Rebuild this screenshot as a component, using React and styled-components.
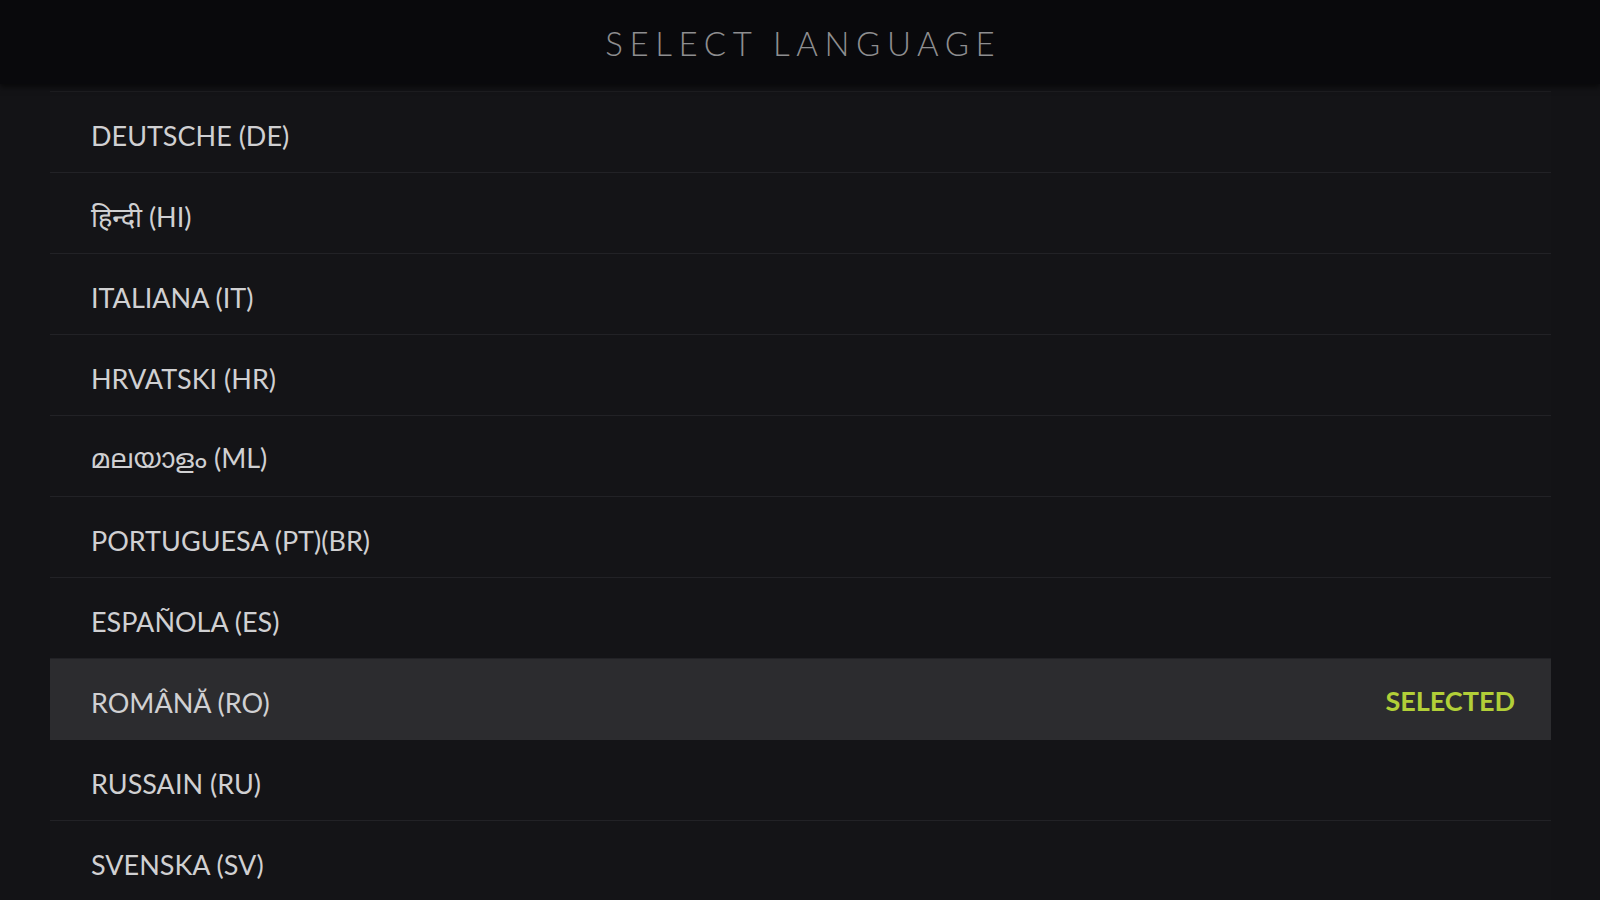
import React from "react";
import styled, { createGlobalStyle } from "styled-components";

const Global = createGlobalStyle`
  html, body { margin: 0; padding: 0; background: #131316; }
  body { font-family: Lato, "Noto Sans", sans-serif; overflow: hidden; }
`;

const Page = styled.div`
  width: 1600px;
  height: 900px;
  display: flex;
  flex-direction: column;
  background: #131316;
  overflow: hidden;
`;

const Header = styled.header`
  height: 84px;
  flex: 0 0 84px;
  background: #09090c;
  display: flex;
  align-items: center;
  justify-content: center;
  box-shadow: 0 3px 6px rgba(0, 0, 0, 0.6);
  position: relative;
  z-index: 1;
`;

const Title = styled.h1`
  margin: 2px -0.2em 0 0;
  font-family: Lato, "Noto Sans", sans-serif;
  font-weight: 300;
  font-size: 33px;
  letter-spacing: 0.2em;
  color: #8e8e90;
`;

const List = styled.ul`
  list-style: none;
  margin: 7px 49px 0 50px;
  padding: 0;
  border-top: 1px solid #1e1e21;
`;

const Row = styled.li`
  height: 81px;
  box-sizing: border-box;
  padding: 7px 36px 0 41px;
  display: flex;
  align-items: center;
  justify-content: space-between;
  background: ${(p) => (p.$selected ? "#2c2c2f" : "#141417")};
  border-bottom: 1px solid ${(p) => (p.$selected ? "#2c2c2f" : "#222226")};
`;

const Label = styled.span`
  font-family: Lato, "Noto Sans", "Noto Sans Devanagari", "Noto Sans Malayalam", sans-serif;
  font-size: 27px;
  font-weight: 400;
  color: #d0d0d2;
`;

const Badge = styled.span`
  font-family: Lato, "Noto Sans", sans-serif;
  font-size: 27px;
  font-weight: 700;
  color: #b2cf38;
  margin-bottom: 4px;
`;

const languages = [
  "DEUTSCHE (DE)",
  "हिन्दी (HI)",
  "ITALIANA (IT)",
  "HRVATSKI (HR)",
  "മലയാളം (ML)",
  "PORTUGUESA (PT)(BR)",
  "ESPAÑOLA (ES)",
  "ROMÂNĂ (RO)",
  "RUSSAIN (RU)",
  "SVENSKA (SV)",
];

export default function App() {
  return (
    <Page>
      <Global />
      <Header>
        <Title>SELECT LANGUAGE</Title>
      </Header>
      <List>
        {languages.map((l) => {
          const sel = l === "ROMÂNĂ (RO)";
          return (
            <Row key={l} $selected={sel}>
              <Label>{l}</Label>
              {sel && <Badge>SELECTED</Badge>}
            </Row>
          );
        })}
      </List>
    </Page>
  );
}
